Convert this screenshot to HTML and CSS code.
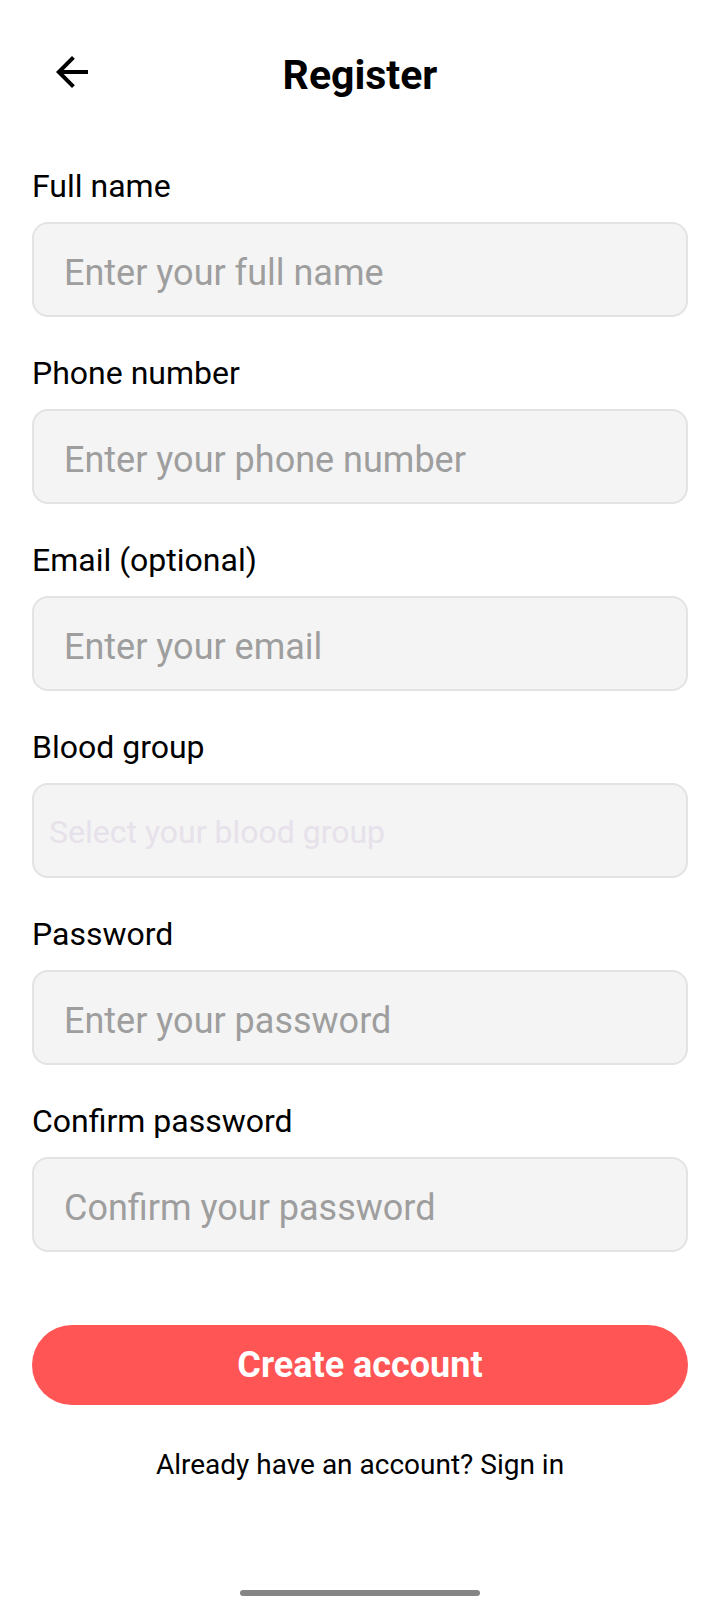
FILE: index.html
```html
<!DOCTYPE html>
<html lang="en">
<head>
<meta charset="utf-8">
<title>Register</title>
<link rel="stylesheet" href="styles.css">
</head>
<body>
<div class="screen">
  <header class="header">
    <button class="back" aria-label="Back">
      <svg viewBox="0 0 24 24" width="48" height="48"><path d="M20 11H7.83l5.59-5.59L12 4l-8 8 8 8 1.41-1.41L7.83 13H20v-2z" fill="#000"/></svg>
    </button>
    <h1 class="title">Register</h1>
  </header>

  <form class="form">
    <div class="field">
      <label class="label">Full name</label>
      <div class="input"><span class="ph">Enter your full name</span></div>
    </div>
    <div class="field">
      <label class="label">Phone number</label>
      <div class="input"><span class="ph">Enter your phone number</span></div>
    </div>
    <div class="field">
      <label class="label">Email (optional)</label>
      <div class="input"><span class="ph">Enter your email</span></div>
    </div>
    <div class="field">
      <label class="label">Blood group</label>
      <div class="input select"><span class="ph-select">Select your blood group</span></div>
    </div>
    <div class="field">
      <label class="label">Password</label>
      <div class="input"><span class="ph">Enter your password</span></div>
    </div>
    <div class="field">
      <label class="label">Confirm password</label>
      <div class="input"><span class="ph">Confirm your password</span></div>
    </div>

    <button type="button" class="primary">Create account</button>
    <p class="signin">Already have an account? Sign in</p>
  </form>

  <div class="home-indicator"></div>
</div>
</body>
</html>
```

FILE: styles.css
```css
* { box-sizing: border-box; }
html, body {
  margin: 0;
  padding: 0;
  background: #ffffff;
}
body {
  font-family: Roboto, "Noto Sans", "Liberation Sans", sans-serif;
  color: #000;
}
.screen {
  position: relative;
  width: 720px;
  height: 1600px;
  overflow: hidden;
}
.header {
  position: relative;
  height: 96px;
  padding-top: 48px;
  display: flex;
  align-items: flex-start;
  justify-content: center;
}
.back {
  position: absolute;
  left: 48px;
  top: 48px;
  width: 48px;
  height: 48px;
  padding: 0;
  border: 0;
  background: none;
  display: block;
}
.back svg { display: block; }
.title {
  margin: 0;
  padding-top: 3px;
  font-size: 41px;
  line-height: 48px;
  font-weight: 700;
  color: #000;
}
.form {
  padding: 71px 32px 0;
  display: flex;
  flex-direction: column;
}
.field {
  display: flex;
  flex-direction: column;
  margin-bottom: 37px;
}
.field:nth-child(6) { margin-bottom: 0; }
.label {
  font-size: 32px;
  line-height: 38px;
  margin-bottom: 17px;
  color: #000;
}
.input {
  height: 95px;
  background: #f4f4f4;
  border: 2px solid #e3e3e3;
  border-radius: 16px;
  display: flex;
  align-items: center;
  padding-left: 30px;
}
.ph {
  font-size: 36px;
  line-height: 42px;
  padding-top: 6px;
  color: #9e9e9e;
}
.input.select { padding-left: 15px; }
.ph-select {
  font-size: 32px;
  line-height: 38px;
  padding-top: 2px;
  color: #e6e1ea;
}
.primary {
  margin-top: 73px;
  height: 80px;
  border: 0;
  border-radius: 40px;
  background: #ff5555;
  color: #fff;
  font-family: Roboto, "Noto Sans", "Liberation Sans", sans-serif;
  font-size: 36px;
  font-weight: 700;
  padding: 0;
}
.signin {
  margin: 43px 0 0;
  text-align: center;
  font-size: 28px;
  line-height: 33px;
  color: #000;
}
.home-indicator {
  position: absolute;
  left: 240px;
  bottom: 4px;
  width: 240px;
  height: 6px;
  border-radius: 3px;
  background: #858585;
}
```
